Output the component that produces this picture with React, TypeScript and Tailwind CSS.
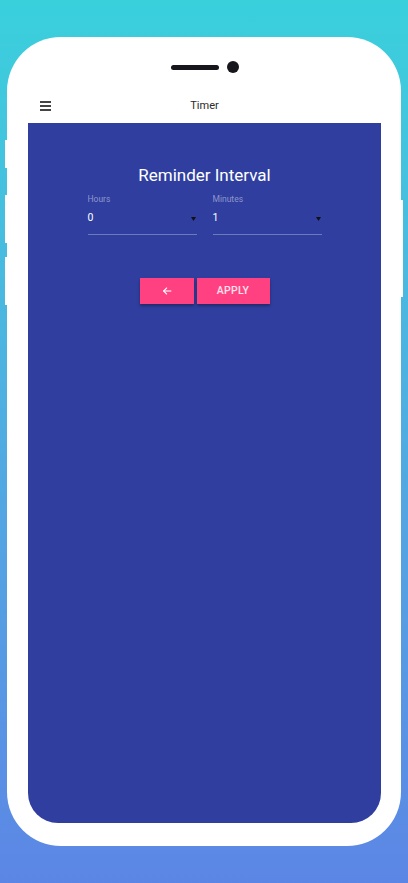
import React from "react";

function Select({ label, value }: { label: string; value: string }) {
  return (
    <div className="flex flex-col">
      <span className="text-[8.5px] leading-[10px] text-white/45">{label}</span>
      <div className="mt-[8px] flex items-center justify-between pr-[1px]">
        <span className="text-[10.5px] leading-[12px] text-white">{value}</span>
        <svg width="5" height="4" viewBox="0 0 5 4" className="mt-[2px]">
          <path d="M0 0 L5 0 L2.5 4 Z" fill="#111" />
        </svg>
      </div>
      <div className="mt-[10px] h-px bg-white/30" />
    </div>
  );
}

export default function App() {
  return (
    <div
      className="w-[408px] h-[883px] bg-gradient-to-b from-[#39d0dc] to-[#5c86e5] pt-[37px] px-[7px]"
      style={{ fontFamily: "Roboto, 'Noto Sans', sans-serif" }}
    >
      <div className="relative w-[394px] h-[809px] rounded-[54px] bg-white pl-[21px] pr-[20px]">
        {/* side buttons */}
        <div className="absolute left-[-2px] top-[103px] h-[28px] w-[2px] bg-white" />
        <div className="absolute left-[-2px] top-[158px] h-[48px] w-[2px] bg-white" />
        <div className="absolute left-[-2px] top-[220px] h-[48px] w-[2px] bg-white" />
        <div className="absolute right-[-2px] top-[163px] h-[97px] w-[2px] bg-white" />

        {/* speaker + camera */}
        <div className="flex h-[48px] items-start justify-center pt-[24px]">
          <div className="mt-[4px] h-[5px] w-[48px] rounded-full bg-[#16161c]" />
          <div className="ml-[8px] h-[12px] w-[12px] rounded-full bg-[#16161c]" />
        </div>

        {/* app bar */}
        <div className="relative flex h-[38px] items-start justify-center pt-[14px]">
          <div className="absolute left-[12px] top-[16px] flex w-[11px] flex-col gap-[2.5px]">
            <div className="h-[1.5px] bg-[#444]" />
            <div className="h-[1.5px] bg-[#444]" />
            <div className="h-[1.5px] bg-[#444]" />
          </div>
          <span className="text-[11px] leading-[13px] text-[#2a2a2a]">Timer</span>
        </div>

        {/* screen */}
        <div className="h-[700px] rounded-b-[30px] bg-[#303f9f] pt-[42px]">
          <h1 className="text-center text-[17px] leading-[20px] text-white">Reminder Interval</h1>
          <div className="mx-auto mt-[9px] grid w-[234px] grid-cols-2 gap-4">
            <Select label="Hours" value="0" />
            <Select label="Minutes" value="1" />
          </div>
          <div className="mt-[43px] flex justify-center gap-[3px]">
            <button className="flex h-[26px] w-[54px] items-center justify-center bg-[#ff4081] shadow-[0_2px_3px_rgba(0,0,0,0.35)]">
              <svg width="10" height="10" viewBox="0 0 24 24" fill="none" stroke="white" strokeWidth="2.6" strokeLinecap="square">
                <path d="M21 12H4" />
                <path d="M11 5L4 12L11 19" />
              </svg>
            </button>
            <button className="flex h-[26px] w-[73px] items-center justify-center bg-[#ff4081] text-[10.5px] font-medium tracking-[0.3px] text-white/85 shadow-[0_2px_3px_rgba(0,0,0,0.35)]">
              APPLY
            </button>
          </div>
        </div>
      </div>
    </div>
  );
}
